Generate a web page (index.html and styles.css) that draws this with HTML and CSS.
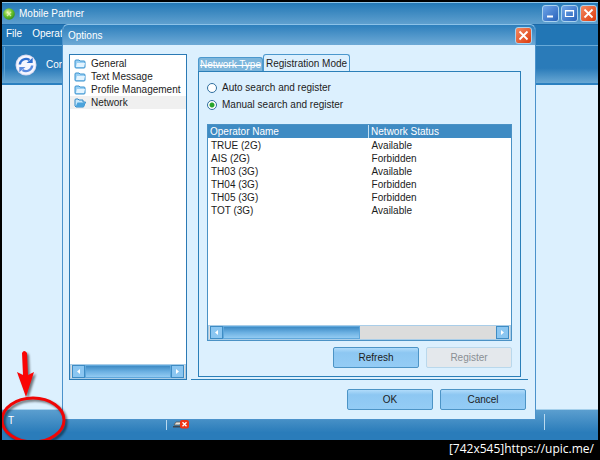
FILE: index.html
```html
<!DOCTYPE html>
<html lang="en">
<head>
    <meta charset="utf-8">
    <title>Mobile Partner</title>
    <link rel="stylesheet" href="styles.css">
</head>
<body>
    <div class="window">
        <header class="titlebar">
            <svg class="app-icon" width="12" height="12" viewBox="0 0 12 12">
                <defs>
                    <radialGradient id="ball" cx=".4" cy=".35" r=".7">
                        <stop offset="0" stop-color="#e6f7a0"/>
                        <stop offset=".5" stop-color="#6cc52e"/>
                        <stop offset="1" stop-color="#2f8a1c"/>
                    </radialGradient>
                </defs>
                <circle cx="6" cy="6" r="5.8" fill="url(#ball)"/>
                <path d="M4 4l4 4M8 4L4 8" stroke="#f3fbd0" stroke-width="1.2" opacity=".7"/>
            </svg>
            <h1>Mobile Partner</h1>
            <div class="window-buttons">
                <button class="win-btn" aria-label="Minimize"><svg width="13" height="13" viewBox="0 0 13 13"><path d="M3 9.5h6" stroke="#fff" stroke-width="2"/></svg></button>
                <button class="win-btn" aria-label="Maximize"><svg width="13" height="13" viewBox="0 0 13 13"><path d="M2.5 3.5h8v6h-8zM2.5 4h8" fill="none" stroke="#fff" stroke-width="1.2"/></svg></button>
                <button class="win-btn close" aria-label="Close"><svg width="13" height="13" viewBox="0 0 13 13"><path d="M2.5 2.5l8 8M10.5 2.5l-8 8" stroke="#fff" stroke-width="1.8"/></svg></button>
            </div>
        </header>
        <nav class="menubar">
            <a href="#">File</a>
            <a href="#">Operat</a>
        </nav>
        <div class="toolbar">
            <button class="tool">
                <svg width="22" height="22" viewBox="0 0 22 22">
                    <circle cx="11" cy="11" r="10.5" fill="#d5d8f0"/>
                    <circle cx="11" cy="11" r="9.5" fill="#f6f6fe"/>
                    <path d="M4.8 10.500A6.200 6.200 0 0 1 14.500 6" fill="none" stroke="#2f6fd0" stroke-width="2.400"/>
                    <path d="M11.500 9h6.200V3.800z" fill="#2f6fd0"/>
                    <path d="M17.200 11.500A6.200 6.200 0 0 1 7.500 16" fill="none" stroke="#5b8be0" stroke-width="2.400"/>
                    <path d="M10.500 13H4.300v5.200z" fill="#5b8be0"/>
                </svg>
                <span>Con</span>
            </button>
        </div>
        <main class="workspace"></main>
        <footer class="statusbar">
            <span class="signal">T</span>
            <svg class="modem" width="16" height="9" viewBox="0 0 16 9">
                <path d="M3 2h5l-1 3H1z" fill="#e8e4dc" stroke="#555" stroke-width=".8"/>
                <path d="M0 6h8v1.500H0z" fill="#3d4650"/>
                <rect x="7" y="0" width="9" height="8.500" rx="2" fill="#ee3515"/>
                <path d="M9.500 2.200l4 4M13.500 2.200l-4 4" stroke="#fff" stroke-width="1.300"/>
            </svg>
            <span class="tail"></span>
        </footer>

        <section class="dialog">
            <header class="dialog-title">
                <h2>Options</h2>
                <button class="win-btn close" aria-label="Close options"><svg width="13" height="13" viewBox="0 0 13 13"><path d="M2.5 2.5l8 8M10.5 2.5l-8 8" stroke="#fff" stroke-width="1.8"/></svg></button>
            </header>
            <div class="dialog-body">
                <div class="tree">
                    <ul>
                        <li><svg class="folder" viewBox="0 0 12 10"><path d="M1 8V2q0-1 1-1h3l1 1h4q1 0 1 1v5q0 1-1 1H2q-1 0-1-1z" fill="#9bd0f4" stroke="#3b93cf"/><path d="M3 4h8l-1 4H2z" fill="#e3f4ff"/></svg>General</li>
                        <li><svg class="folder" viewBox="0 0 12 10"><path d="M1 8V2q0-1 1-1h3l1 1h4q1 0 1 1v5q0 1-1 1H2q-1 0-1-1z" fill="#9bd0f4" stroke="#3b93cf"/><path d="M3 4h8l-1 4H2z" fill="#e3f4ff"/></svg>Text Message</li>
                        <li><svg class="folder" viewBox="0 0 12 10"><path d="M1 8V2q0-1 1-1h3l1 1h4q1 0 1 1v5q0 1-1 1H2q-1 0-1-1z" fill="#9bd0f4" stroke="#3b93cf"/><path d="M3 4h8l-1 4H2z" fill="#e3f4ff"/></svg>Profile Management</li>
                        <li class="selected"><svg class="folder" viewBox="0 0 12 10"><path d="M1 8V2q0-1 1-1h2l1 1h4v2h2.500L9.500 9H2z" fill="#c9e8fb" stroke="#2f86c4"/><path d="M3.500 4.500h8L9.500 9H1.500z" fill="#4ba3dc"/></svg>Network</li>
                    </ul>
                    <div class="scrollbar">
                        <button aria-label="Scroll left"><svg width="5" height="7" viewBox="0 0 5 7"><path d="M4 1v5L1 3.500z" fill="#fff"/></svg></button>
                        <div class="thumb full"></div>
                        <button aria-label="Scroll right"><svg width="5" height="7" viewBox="0 0 5 7"><path d="M1 1v5l3-2.500z" fill="#fff"/></svg></button>
                    </div>
                </div>
                <div class="settings">
                    <div class="tabs">
                        <button class="tab">Network Type</button>
                        <button class="tab active">Registration Mode</button>
                    </div>
                    <div class="panel">
                        <label class="option"><input type="radio" name="mode">Auto search and register</label>
                        <label class="option"><input type="radio" name="mode" checked>Manual search and register</label>
                        <div class="list">
                            <table>
                                <thead>
                                    <tr><th>Operator Name</th><th>Network Status</th></tr>
                                </thead>
                                <tbody>
                                    <tr><td>TRUE (2G)</td><td>Available</td></tr>
                                    <tr><td>AIS (2G)</td><td>Forbidden</td></tr>
                                    <tr><td>TH03 (3G)</td><td>Available</td></tr>
                                    <tr><td>TH04 (3G)</td><td>Forbidden</td></tr>
                                    <tr><td>TH05 (3G)</td><td>Forbidden</td></tr>
                                    <tr><td>TOT (3G)</td><td>Available</td></tr>
                                </tbody>
                            </table>
                            <div class="scrollbar">
                                <button aria-label="Scroll left"><svg width="5" height="7" viewBox="0 0 5 7"><path d="M4 1v5L1 3.500z" fill="#fff"/></svg></button>
                                <div class="track"><div class="thumb"></div></div>
                                <button aria-label="Scroll right"><svg width="5" height="7" viewBox="0 0 5 7"><path d="M1 1v5l3-2.500z" fill="#fff"/></svg></button>
                            </div>
                        </div>
                        <div class="actions">
                            <button class="btn">Refresh</button>
                            <button class="btn" disabled>Register</button>
                        </div>
                    </div>
                </div>
            </div>
            <div class="dialog-buttons">
                <button class="btn">OK</button>
                <button class="btn">Cancel</button>
            </div>
        </section>

        <!-- arrow and circle pointing at the network type -->
        <svg class="marker" width="68" height="94" viewBox="0 0 68 94">
            <g class="marker-shape">
                <path d="M20 7q2-4 5 0l1 22 6-3-8 25-9-25 6 3z" fill="#fa0505"/>
                <ellipse cx="31" cy="74" rx="31" ry="22" fill="none" stroke="#f00505" stroke-width="3"/>
            </g>
        </svg>
    </div>
    <p class="source">[742x545]<a href="#">https://upic.me/</a></p>
</body>
</html>
```
FILE: styles.css
```css
* {
    box-sizing: border-box;
}

body {
    display: flex;
    flex-direction: column;
    min-height: 100vh;
    margin: 0;
    padding: 2px 2px 0;
    background: #000;
    color: #1c1c1c;
    font: 10px/13px "Liberation Sans", Arial, sans-serif;
}

button {
    padding: 0;
    border: 0;
    font: inherit;
    color: inherit;
}

a {
    color: inherit;
    text-decoration: none;
}

h1, h2 {
    margin: 0;
    font-size: 10px;
    font-weight: normal;
    color: #fff;
}

/* Main window */
.window {
    position: relative;
    display: flex;
    flex: 1;
    flex-direction: column;
    overflow: hidden;
    background: #dcf0fe;
}

.titlebar {
    display: flex;
    align-items: center;
    gap: 4px;
    height: 22px;
    padding: 0 1px;
    border-top: 1px solid #8cc4e8;
    background: linear-gradient(#2378b6, #5fa0cf);
}

.window-buttons {
    display: flex;
    gap: 2px;
    margin-left: auto;
}

.win-btn {
    display: flex;
    align-items: center;
    justify-content: center;
    width: 17px;
    height: 17px;
    border: 1px solid #a9d2ef;
    border-radius: 3px;
    background: linear-gradient(135deg, #6ea5e8, #2862bb);
}

.win-btn.close {
    background: linear-gradient(135deg, #f48a62, #dc3a0c);
}

.menubar {
    display: flex;
    align-items: center;
    gap: 10px;
    height: 21px;
    padding: 0 4px 4px;
    border-top: 1px solid #1c69a8;
    background: #2276b5;
    color: #fff;
}

.toolbar {
    height: 40px;
    padding: 1px 2px;
    border-top: 1px solid #68aad8;
    border-bottom: 2px solid #2b80c0;
    background: linear-gradient(#2a7bb9 60%, #69a8d4);
}

.tool {
    display: flex;
    align-items: center;
    gap: 9px;
    width: 100px;
    height: 100%;
    padding-left: 10px;
    border-left: 1px solid #5da2d2;
    background: none;
    color: #fff;
}

.workspace {
    flex: 1;
}

.statusbar {
    display: flex;
    height: 31px;
    padding: 4px 0 10px 6px;
    border-top: 1px solid #a5d0ec;
    background: linear-gradient(#5b9ecf, #2a7cba 75%);
    color: #fff;
}

.signal {
    width: 159px;
    border-right: 1px solid #b9d9ee;
}

.modem {
    margin: 6px 0 0 6px;
}

.tail {
    width: 54px;
    margin-left: auto;
    border-left: 1px solid #b9d9ee;
}

/* Options dialog */
.dialog {
    position: absolute;
    top: 22px;
    right: 62px;
    bottom: 20px;
    left: 60px;
    display: flex;
    flex-direction: column;
    border: 1px solid #4b92cb;
    border-top-color: #8bc2e8;
    border-radius: 6px 6px 0 0;
    background: #dcf0fe;
}

.dialog-title {
    display: flex;
    align-items: center;
    justify-content: space-between;
    height: 20px;
    padding: 0 3px 0 5px;
    border-radius: 5px 5px 0 0;
    background: linear-gradient(#2d7fbc, #6eaad6);
}

.dialog-body {
    display: flex;
    flex: 1;
    gap: 4px;
    padding: 9px 7px 0 6px;
}

.tree {
    display: flex;
    flex-direction: column;
    width: 118px;
    border: 1px solid #2b7ab5;
    background: #fff;
}

.tree ul {
    flex: 1;
    margin: 0;
    padding: 2px 0 0;
    list-style: none;
}

.tree li {
    display: flex;
    align-items: center;
    gap: 5px;
    height: 13px;
    padding-left: 4px;
    white-space: nowrap;
}

.tree .selected {
    background: #f0f0f0;
}

.folder {
    flex: none;
    width: 12px;
    height: 10px;
}

.scrollbar {
    display: flex;
    height: 15px;
    padding: 0 1px;
    background: #dcdcdc;
    border: 1px solid #a9cde8;
}

.scrollbar button {
    display: flex;
    align-items: center;
    justify-content: center;
    width: 13px;
    border: 1px solid #3e8cc4;
    background: #8bc6f1;
}

.track {
    display: flex;
    flex: 1;
}

.thumb {
    width: 50%;
    border: 1px solid #60a8dc;
    background: linear-gradient(#3d8ac4, #6bb0e2 50%, #93cbf2);
}

.thumb.full {
    flex: 1;
}

.settings {
    display: flex;
    flex: 1;
    flex-direction: column;
    padding: 0 7px 2px;
    border-bottom: 1px solid #2b7fb8;
}

.tabs {
    display: flex;
    align-items: flex-end;
}

.tab {
    height: 14px;
    padding: 0 1px;
    border: 1px solid #4b98cd;
    border-bottom: 0;
    border-radius: 3px 3px 0 0;
    background: #7db6dc;
    color: #fff;
    text-decoration: line-through;
    white-space: nowrap;
}

.tab.active {
    height: 18px;
    margin-bottom: -1px;
    padding: 0 2px;
    background: #dcf0fe;
    color: #1c1c1c;
    text-decoration: none;
}

.panel {
    display: flex;
    flex: 1;
    flex-direction: column;
    padding: 7px 8px 8px;
    border: 1px solid #2b7fb8;
}

.option {
    display: flex;
    align-items: center;
    gap: 5px;
    height: 17px;
}

.option input {
    width: 10px;
    height: 10px;
    margin: 0;
    border: 1px solid #2f6f9f;
    border-radius: 50%;
    background: #fff;
    appearance: none;
}

.option input:checked {
    background: radial-gradient(circle, #27a52b 2px, #fff 3px);
}

.list {
    display: flex;
    flex: 1;
    flex-direction: column;
    justify-content: space-between;
    margin: 11px 0 6px;
    border: 1px solid #4b92c5;
    background: #fff;
}

table {
    width: 100%;
    border-collapse: collapse;
    table-layout: fixed;
}

th, td {
    height: 13px;
    padding: 0 3px;
    line-height: 13px;
    text-align: left;
}

th:first-child {
    width: 53%;
}

th {
    padding: 0 2px;
    background: #3f8bc3;
    color: #fff;
    font-weight: normal;
}

th + th {
    border-left: 1px solid #c5e0f2;
}

tbody::before {
    display: block;
    height: 1px;
    content: "";
}

.actions, .dialog-buttons {
    display: flex;
    gap: 7px;
    justify-content: flex-end;
}

.dialog-buttons {
    padding: 9px 9px;
}

.btn {
    width: 86px;
    height: 21px;
    border: 1px solid #4c94c6;
    border-radius: 2px;
    background: linear-gradient(#b0dbfa, #8dc7f2 25%, #94ccf5);
}

.btn:disabled {
    border-color: #b9d8ec;
    background: #e4e8ec;
    color: #8a8f94;
}

.marker {
    position: absolute;
    bottom: 0;
    left: 0;
    pointer-events: none;
}

.marker-shape {
    filter: drop-shadow(2px 2px 1px rgba(0, 0, 0, .5));
}

.source {
    height: 20px;
    margin: 0;
    padding-right: 4px;
    color: #fff;
    font: 12px/18px "Open Sans", sans-serif;
    text-align: right;
}
```
